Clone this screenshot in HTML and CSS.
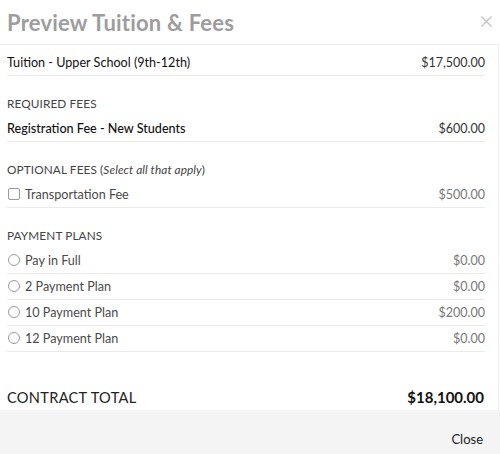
FILE: index.html
```html
<!DOCTYPE html>
<html lang="en">
<head>
<meta charset="utf-8">
<title>Preview Tuition &amp; Fees</title>
<link rel="stylesheet" href="styles.css">
</head>
<body>
<div class="modal">
  <header class="modal-header">
    <h1 class="modal-title">Preview Tuition &amp; Fees</h1>
    <button class="close-x" aria-label="Close">
      <svg width="11" height="11" viewBox="0 0 11 11"><path d="M0.5 0.5 L10.5 10.5 M10.5 0.5 L0.5 10.5" stroke="#c4c4c4" stroke-width="1.4" fill="none"/></svg>
    </button>
  </header>
  <div class="modal-body">
    <div class="row row-first">
      <span class="item item-dark">Tuition - Upper School (9th-12th)</span>
      <span class="amount amount-dark">$17,500.00</span>
    </div>

    <div class="section-label">REQUIRED FEES</div>
    <div class="row">
      <span class="item item-dark item-medium">Registration Fee - New Students</span>
      <span class="amount amount-dark">$600.00</span>
    </div>

    <div class="section-label">OPTIONAL FEES (<em>Select all that apply</em>)</div>
    <div class="row">
      <label class="item item-choice"><span class="checkbox"></span>Transportation Fee</label>
      <span class="amount">$500.00</span>
    </div>

    <div class="section-label">PAYMENT PLANS</div>
    <div class="row">
      <label class="item item-choice"><span class="radio"></span>Pay in Full</label>
      <span class="amount">$0.00</span>
    </div>
    <div class="row">
      <label class="item item-choice"><span class="radio"></span>2 Payment Plan</label>
      <span class="amount">$0.00</span>
    </div>
    <div class="row">
      <label class="item item-choice"><span class="radio"></span>10 Payment Plan</label>
      <span class="amount">$200.00</span>
    </div>
    <div class="row">
      <label class="item item-choice"><span class="radio"></span>12 Payment Plan</label>
      <span class="amount">$0.00</span>
    </div>

    <div class="total">
      <span class="total-label">CONTRACT TOTAL</span>
      <span class="total-amount">$18,100.00</span>
    </div>
  </div>
  <footer class="modal-footer">
    <button class="close-btn">Close</button>
  </footer>
</div>
</body>
</html>
```
FILE: styles.css
```css
* { box-sizing: border-box; }
html, body { margin: 0; padding: 0; background: #fff; }
body {
  font-family: Lato, "Open Sans", Arial, sans-serif;
  color: #222;
  width: 500px;
  height: 454px;
  overflow: hidden;
}
.modal {
  width: 500px;
  height: 454px;
  display: flex;
  flex-direction: column;
}
.modal-header {
  height: 44px;
  display: flex;
  align-items: center;
  justify-content: space-between;
  padding: 0 6px 0 7px;
}
.modal-title {
  margin: 0;
  font-size: 22px;
  font-weight: 700;
  color: #9d9d9d;
  letter-spacing: 0.2px;
}
.close-x {
  border: 0;
  background: none;
  padding: 0;
  width: 16px;
  height: 16px;
  display: flex;
  align-items: center;
  justify-content: center;
  margin-top: -1px;
}
.modal-body {
  height: 366px;
  border-top: 1px solid #eeeeee;
  border-right: 1px solid #eeeeee;
  margin-right: 1px;
  padding: 5px 13px 0 7px;
  display: flex;
  flex-direction: column;
}
.row {
  height: 26px;
  display: flex;
  align-items: center;
  justify-content: space-between;
  border-bottom: 1px solid #ebebeb;
  font-size: 12.6px;
  flex: none;
  padding-bottom: 1px;
}
.section-label {
  height: 20px;
  line-height: 20px;
  margin-top: 18px;
  margin-bottom: 2px;
  font-size: 11.8px;
  color: #444;
  letter-spacing: 0.1px;
  flex: none;
}
.section-label em { font-style: italic; }
.item { color: #4a4a4a; }
.item-dark { color: #111; }
.item-medium { font-weight: 500; }
.item-choice {
  display: flex;
  align-items: center;
  gap: 5px;
  padding-left: 1px;
}
.amount { color: #777; font-size: 12.5px; }
.amount-dark { color: #333; }
.checkbox {
  width: 12px;
  height: 12px;
  border: 1px solid #9a9a9a;
  border-radius: 2px;
  background: #fff;
}
.radio {
  width: 12px;
  height: 12px;
  border: 1px solid #9a9a9a;
  border-radius: 50%;
  background: #fff;
}
.total {
  margin-top: auto;
  height: 26px;
  display: flex;
  align-items: center;
  justify-content: space-between;
  padding-right: 1px;
}
.total-label {
  font-size: 14.6px;
  color: #222;
  letter-spacing: 0.3px;
}
.total-amount {
  font-size: 15px;
  font-weight: 700;
  color: #111;
}
.modal-footer {
  flex: 1;
  background: #f4f4f4;
  display: flex;
  align-items: center;
  justify-content: flex-end;
  padding: 14px 17px 0 0;
}
.close-btn {
  border: 0;
  background: none;
  padding: 0;
  font-family: inherit;
  font-size: 13px;
  color: #222;
}
```
